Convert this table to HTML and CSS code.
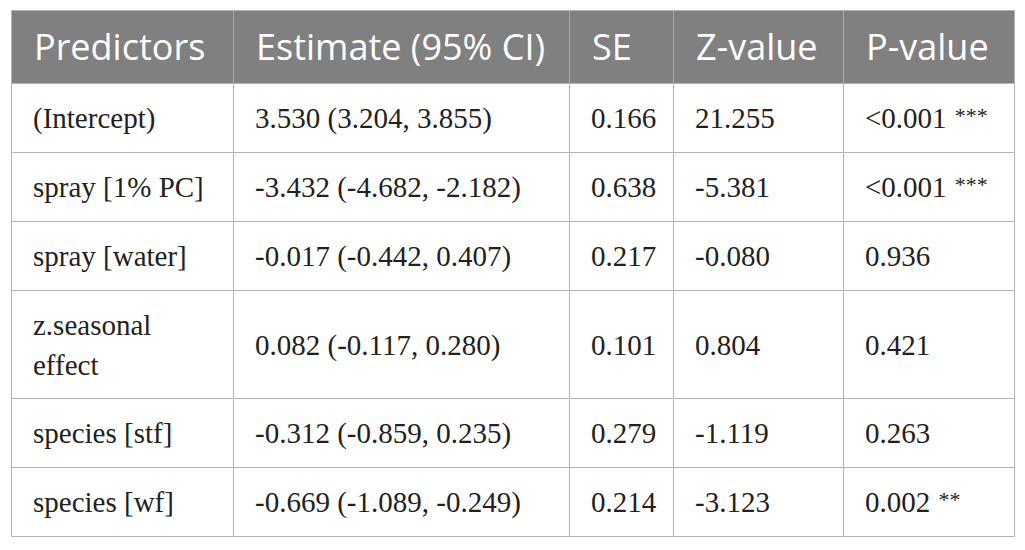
FILE: index.html
```html
<!DOCTYPE html>
<html>
<head>
<meta charset="utf-8">
<link rel="stylesheet" href="styles.css">
</head>
<body>
<table class="stats">
  <colgroup>
    <col class="c1"><col class="c2"><col class="c3"><col class="c4"><col class="c5">
  </colgroup>
  <thead>
    <tr>
      <th>Predictors</th>
      <th>Estimate (95% CI)</th>
      <th>SE</th>
      <th>Z-value</th>
      <th>P-value</th>
    </tr>
  </thead>
  <tbody>
    <tr>
      <td>(Intercept)</td>
      <td>3.530 (3.204, 3.855)</td>
      <td>0.166</td>
      <td>21.255</td>
      <td>&lt;0.001 <span class="sig">***</span></td>
    </tr>
    <tr>
      <td>spray [1% PC]</td>
      <td>-3.432 (-4.682, -2.182)</td>
      <td>0.638</td>
      <td>-5.381</td>
      <td>&lt;0.001 <span class="sig">***</span></td>
    </tr>
    <tr>
      <td>spray [water]</td>
      <td>-0.017 (-0.442, 0.407)</td>
      <td>0.217</td>
      <td>-0.080</td>
      <td>0.936</td>
    </tr>
    <tr class="tall">
      <td>z.seasonal<br>effect</td>
      <td>0.082 (-0.117, 0.280)</td>
      <td>0.101</td>
      <td>0.804</td>
      <td>0.421</td>
    </tr>
    <tr>
      <td>species [stf]</td>
      <td>-0.312 (-0.859, 0.235)</td>
      <td>0.279</td>
      <td>-1.119</td>
      <td>0.263</td>
    </tr>
    <tr>
      <td>species [wf]</td>
      <td>-0.669 (-1.089, -0.249)</td>
      <td>0.214</td>
      <td>-3.123</td>
      <td>0.002 <span class="sig">**</span></td>
    </tr>
  </tbody>
</table>
</body>
</html>
```
FILE: styles.css
```css
html, body {
  margin: 0;
  padding: 0;
  background: #ffffff;
}

.stats {
  margin: 10px 0 0 11px;
  width: 1003px;
  border-collapse: collapse;
  table-layout: fixed;
  border: 1px solid #b4b4b4;
}

.c1 { width: 222px; }
.c2 { width: 336px; }
.c3 { width: 104px; }
.c4 { width: 170px; }
.c5 { width: 171px; }

.stats th {
  background: #808080;
  color: #ffffff;
  font-family: "Open Sans", "Noto Sans", sans-serif;
  font-weight: 400;
  font-size: 36px;
  text-align: left;
  height: 73px;
  padding: 0 0 0 22px;
  border-left: 1px solid #a8a8a8;
  box-sizing: border-box;
  vertical-align: middle;
  line-height: 1.2;
}

.stats th:first-child {
  border-left: none;
}

.stats td {
  font-family: "Liberation Serif", "Times New Roman", serif;
  font-size: 29px;
  line-height: 40px;
  color: #231f20;
  text-align: left;
  height: 69px;
  padding: 0 0 0 21px;
  border: 1px solid #b4b4b4;
  box-sizing: border-box;
  vertical-align: middle;
}

.stats tr.tall td {
  height: 108px;
}

.sig {
  font-size: 22px;
  vertical-align: 5px;
  line-height: 0;
  margin-left: 1px;
}
```
